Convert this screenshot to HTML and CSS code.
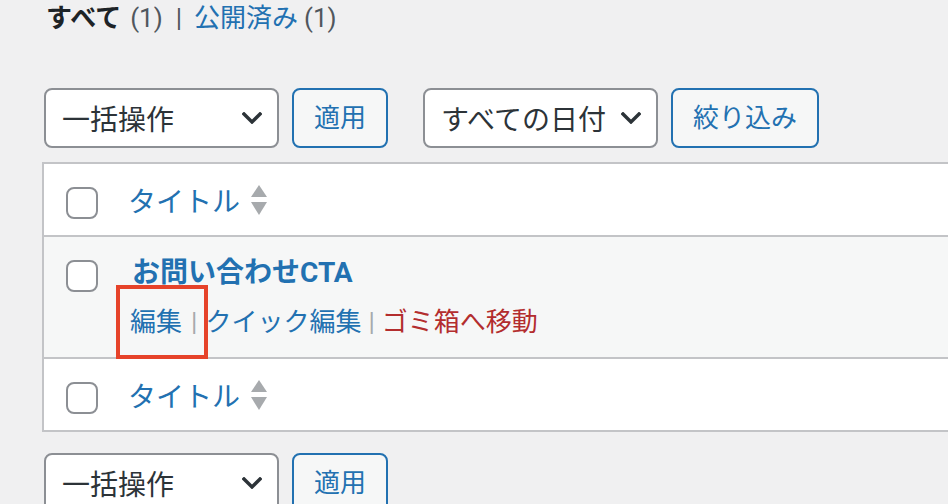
FILE: index.html
```html
<!DOCTYPE html>
<html lang="ja">
<head>
<meta charset="utf-8">
<title>投稿一覧</title>
<link rel="stylesheet" href="styles.css">
</head>
<body>
<div class="wrap">
  <ul class="subsubsub">
    <li class="current">すべて<span class="count">(1)</span></li>
    <li class="sep">|</li>
    <li><a class="link">公開済み</a><span class="count">(1)</span></li>
  </ul>

  <div class="tablenav top">
    <div class="select">
      <span>一括操作</span>
      <svg class="chev" width="20" height="12" viewBox="0 0 20 12"><polyline points="2,2 10,10 18,2" fill="none" stroke="#2c3338" stroke-width="3.4" stroke-linecap="square"/></svg>
    </div>
    <button class="btn">適用</button>
    <div class="select date">
      <span>すべての日付</span>
      <svg class="chev" width="20" height="12" viewBox="0 0 20 12"><polyline points="2,2 10,10 18,2" fill="none" stroke="#2c3338" stroke-width="3.4" stroke-linecap="square"/></svg>
    </div>
    <button class="btn">絞り込み</button>
  </div>

  <div class="table">
    <div class="tr head">
      <div class="cb"><span class="box"></span></div>
      <div class="col-title">
        <a class="link">タイトル</a>
        <svg class="sort" width="16" height="30" viewBox="0 0 16 30"><polygon points="8,0 16,12 0,12" fill="#a7aaad"/><polygon points="0,17 16,17 8,30" fill="#a7aaad"/></svg>
      </div>
    </div>
    <div class="tr row">
      <div class="cb"><span class="box"></span></div>
      <div class="col-main">
        <a class="row-title">お問い合わせCTA</a>
        <div class="row-actions">
          <a class="link">編集</a><span class="bar">|</span><a class="link">クイック編集</a><span class="bar">|</span><a class="trash">ゴミ箱へ移動</a>
        </div>
      </div>
      <span class="highlight"></span>
    </div>
    <div class="tr foot">
      <div class="cb"><span class="box"></span></div>
      <div class="col-title">
        <a class="link">タイトル</a>
        <svg class="sort" width="16" height="30" viewBox="0 0 16 30"><polygon points="8,0 16,12 0,12" fill="#a7aaad"/><polygon points="0,17 16,17 8,30" fill="#a7aaad"/></svg>
      </div>
    </div>
  </div>

  <div class="tablenav bottom">
    <div class="select">
      <span>一括操作</span>
      <svg class="chev" width="20" height="12" viewBox="0 0 20 12"><polyline points="2,2 10,10 18,2" fill="none" stroke="#2c3338" stroke-width="3.4" stroke-linecap="square"/></svg>
    </div>
    <button class="btn">適用</button>
  </div>
</div>
</body>
</html>
```

FILE: styles.css
```css
html, body {
  margin: 0;
  padding: 0;
  background: #f0f0f1;
  overflow: hidden;
}
body {
  font-family: Roboto, "Noto Sans CJK JP", sans-serif;
  color: #3c434a;
  width: 948px;
  height: 504px;
}
.wrap {
  padding-left: 42px;
}
.link {
  color: #2271b1;
  text-decoration: none;
}
.subsubsub {
  list-style: none;
  margin: 0 0 0 4px;
  padding: 0;
  display: flex;
  align-items: center;
  height: 36px;
  font-size: 26px;
  line-height: 36px;
  color: #50575e;
}
.subsubsub li {
  white-space: nowrap;
}
.subsubsub .current {
  font-weight: 700;
  color: #1d2327;
}
.subsubsub .current .count {
  font-weight: 400;
  margin-left: 9px;
}
.subsubsub .count {
  color: #50575e;
  margin-left: 6px;
}
.subsubsub .sep {
  margin: 0 12px 0 13px;
  color: #50575e;
}
.tablenav {
  display: flex;
  align-items: center;
  margin-left: 2px;
  height: 60px;
}
.tablenav.top {
  margin-top: 52px;
}
.tablenav.bottom {
  margin-top: 21px;
}
.select {
  box-sizing: border-box;
  width: 235px;
  height: 60px;
  border: 2px solid #8c8f94;
  border-radius: 8px;
  background: #fff;
  display: flex;
  align-items: center;
  justify-content: space-between;
  padding: 0 15px 0 16px;
  font-size: 28px;
  color: #2c3338;
}
.select.date {
  margin-left: 35px;
}
.chev {
  display: block;
}
.btn {
  box-sizing: border-box;
  height: 60px;
  margin-left: 13px;
  padding: 0 20px;
  border: 2px solid #2271b1;
  border-radius: 8px;
  background: #f6f7f7;
  color: #2271b1;
  font-family: inherit;
  font-size: 26px;
  line-height: 1;
}
.table {
  margin-top: 14px;
  border: 2px solid #c3c4c7;
  border-right: none;
  background: #fff;
}
.tr {
  display: flex;
  position: relative;
}
.head {
  height: 71px;
  border-bottom: 2px solid #c3c4c7;
}
.row {
  height: 120px;
  background: #f6f7f7;
}
.foot {
  height: 71px;
  border-top: 2px solid #c3c4c7;
}
.cb {
  width: 68px;
  flex: none;
  padding-top: 23px;
  box-sizing: border-box;
}
.box {
  display: block;
  box-sizing: border-box;
  width: 32px;
  height: 32px;
  margin-left: 22px;
  border: 2px solid #8c8f94;
  border-radius: 8px;
  background: #fff;
}
.col-title {
  display: flex;
  align-items: center;
  padding-left: 16px;
  font-size: 28px;
}
.sort {
  display: block;
  margin-left: 11px;
}
.col-main {
  padding-left: 18px;
  padding-top: 16px;
}
.row-title {
  display: block;
  margin-left: 2px;
  font-size: 28px;
  font-weight: 700;
  line-height: 40px;
  color: #2271b1;
}
.row-actions {
  margin-top: 11px;
  font-size: 26px;
  line-height: 36px;
  display: flex;
  align-items: center;
}
.bar {
  color: #a7aaad;
  margin: 0 8px 0 9px;
}
.bar + .link + .bar {
  margin: 0 7px 0 7px;
}
.trash {
  color: #b32d2e;
}
.highlight {
  position: absolute;
  left: 72px;
  top: 48px;
  width: 92px;
  height: 74px;
  box-sizing: border-box;
  border: 4px solid #e6432a;
  z-index: 2;
}
```
